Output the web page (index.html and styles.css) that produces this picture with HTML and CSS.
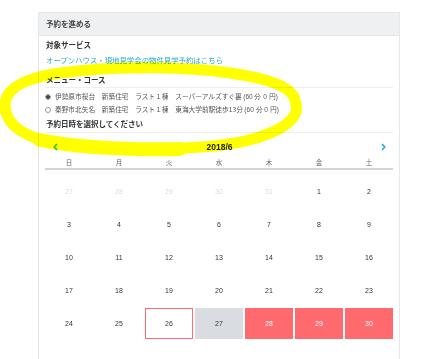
FILE: index.html
```html
<!DOCTYPE html>
<html lang="ja">
<head>
    <meta charset="UTF-8">
    <meta name="viewport" content="width=device-width, initial-scale=1.0">
    <title>予約を進める</title>
    <link rel="stylesheet" href="styles.css">
</head>
<body>
    <div class="panel">
        <div class="panel-head">予約を進める</div>
        <div class="panel-body">
            <h3 class="label">対象サービス</h3>
            <a class="service-link" href="#">オープンハウス・現地見学会の物件見学予約はこちら</a>

            <h3 class="label label-menu">メニュー・コース</h3>
            <div class="courses">
                <label class="course"><input type="radio" name="course" checked>伊勢原市桜台　新築住宅　ラスト１棟　スーパーアルズすぐ裏 <span class="meta">(60 分 0 円)</span></label>
                <label class="course"><input type="radio" name="course">秦野市北矢名　新築住宅　ラスト１棟　東海大学前駅徒歩13分 <span class="meta">(60 分 0 円)</span></label>
            </div>

            <h3 class="label label-date">予約日時を選択してください</h3>

            <div class="calendar">
                <div class="cal-nav">
                    <a class="prev" href="#" aria-label="前の月">
                        <svg width="5" height="8" viewBox="0 0 5 8"><path d="M4 1 L1.2 4 L4 7" fill="none" stroke="currentColor" stroke-width="1.6"/></svg>
                    </a>
                    <span class="month">2018/6</span>
                    <a class="next" href="#" aria-label="次の月">
                        <svg width="5" height="8" viewBox="0 0 5 8"><path d="M1 1 L3.8 4 L1 7" fill="none" stroke="currentColor" stroke-width="1.6"/></svg>
                    </a>
                </div>
                <div class="cal-week">
                    <span>日</span><span>月</span><span>火</span><span>水</span><span>木</span><span>金</span><span>土</span>
                </div>
                <div class="cal-days">
                    <span class="out">27</span><span class="out">28</span><span class="out">29</span><span class="out">30</span><span class="out">31</span><span>1</span><span>2</span>
                    <span>3</span><span>4</span><span>5</span><span>6</span><span>7</span><span>8</span><span>9</span>
                    <span>10</span><span>11</span><span>12</span><span>13</span><span>14</span><span>15</span><span>16</span>
                    <span>17</span><span>18</span><span>19</span><span>20</span><span>21</span><span>22</span><span>23</span>
                    <span>24</span><span>25</span><span class="today">26</span><span class="closed">27</span><span class="open">28</span><span class="open">29</span><span class="open">30</span>
                </div>
            </div>
        </div>
    </div>

    <!-- highlighter mark drawn over the screenshot -->
    <svg class="marker" width="422" height="359" viewBox="0 0 422 359">
        <path d="M295 100 C292 86 265 78 230 73 C190 67 120 65 60 73 C25 78 5 88 5 105 C5 125 25 138 60 144 C100 150 160 151 215 146 C260 141 290 128 296 112 C297 107 296 103 295 100" fill="none" stroke="#ffff00" stroke-width="11" stroke-linecap="round"/>
        <path d="M40 140 C80 148 130 150 180 149" fill="none" stroke="#ffff00" stroke-width="14" stroke-linecap="round"/>
    </svg>
</body>
</html>
```

FILE: styles.css
```css
html, body {
    height: 100%;
}
body {
    margin: 0;
    overflow: hidden;
    background: #fff;
    font-family: "Noto Sans CJK JP", "Noto Sans", sans-serif;
    color: #333;
}
.panel {
    margin: 12px 0 0 38px;
    width: 360px;
    height: 347px;
    border: 1px solid #e6e7e9;
    border-bottom: none;
}
.panel-head {
    height: 22px;
    line-height: 22px;
    padding: 0 7px;
    background: #eff0f2;
    border-bottom: 1px solid #e6e7e9;
    font-size: 7.5px;
    font-weight: 700;
    color: #444;
}
.panel-body {
    padding: 3px 6px 0;
}
.label {
    margin: 0;
    font-size: 7.5px;
    line-height: 12px;
    font-weight: 700;
    color: #333;
    padding-left: 1px;
}
.service-link {
    display: block;
    margin-top: 3px;
    padding-left: 1px;
    font-size: 7.4px;
    line-height: 12px;
    color: #29a8cc;
    text-decoration: none;
}
.label-menu {
    margin-top: 8px;
    padding-bottom: 1px;
    border-bottom: 1px solid #eeeeee;
}
.courses {
    padding-top: 2px;
}
.course {
    display: block;
    height: 13px;
    line-height: 13px;
    font-size: 6.7px;
    color: #555;
    white-space: nowrap;
}
.course input {
    appearance: none;
    -webkit-appearance: none;
    width: 6px;
    height: 6px;
    margin: 0 4px 0 0;
    vertical-align: -1px;
    border: 1px solid #999;
    border-radius: 50%;
    background: #fff;
}
.course input:checked {
    background: radial-gradient(circle, #444 0 1.6px, #fff 2px);
}
.course .meta {
    font-family: "Liberation Sans", sans-serif;
    font-size: 6.5px;
}
.label-date {
    margin-top: 2px;
    padding-bottom: 2px;
    border-bottom: 1px solid #eeeeee;
}
.calendar {
    padding-top: 7px;
}
.cal-nav {
    display: flex;
    justify-content: space-between;
    align-items: center;
    height: 14px;
    padding: 0 7px 0 8px;
}
.cal-nav a {
    display: flex;
}
.cal-nav .prev {
    color: #2fbf3a;
}
.cal-nav .next {
    color: #1eaecf;
}
.month {
    font-family: "Liberation Sans", sans-serif;
    font-size: 8.5px;
    font-weight: 700;
    color: #222;
}
.cal-week,
.cal-days {
    display: grid;
    grid-template-columns: repeat(7, 48px);
    column-gap: 2px;
}
.cal-week {
    margin-top: 2px;
    height: 12px;
    line-height: 12px;
    border-bottom: 2px solid #d4d4d4;
    font-size: 6.5px;
    color: #666;
    text-align: center;
}
.cal-days {
    padding-top: 6px;
    row-gap: 2px;
    grid-auto-rows: 31px;
    font-family: "Liberation Sans", sans-serif;
    font-size: 7px;
    color: #333;
}
.cal-days span {
    display: flex;
    justify-content: center;
    align-items: center;
}
.cal-days .out {
    color: #dcdcdc;
}
.cal-days .today {
    border: 1px solid #ff6b70;
}
.cal-days .closed {
    background: #d9dde1;
}
.cal-days .open {
    background: #ff6a6e;
    color: #fff;
}
.marker {
    position: absolute;
    top: 0;
    left: 0;
    pointer-events: none;
    mix-blend-mode: multiply;
}
```
